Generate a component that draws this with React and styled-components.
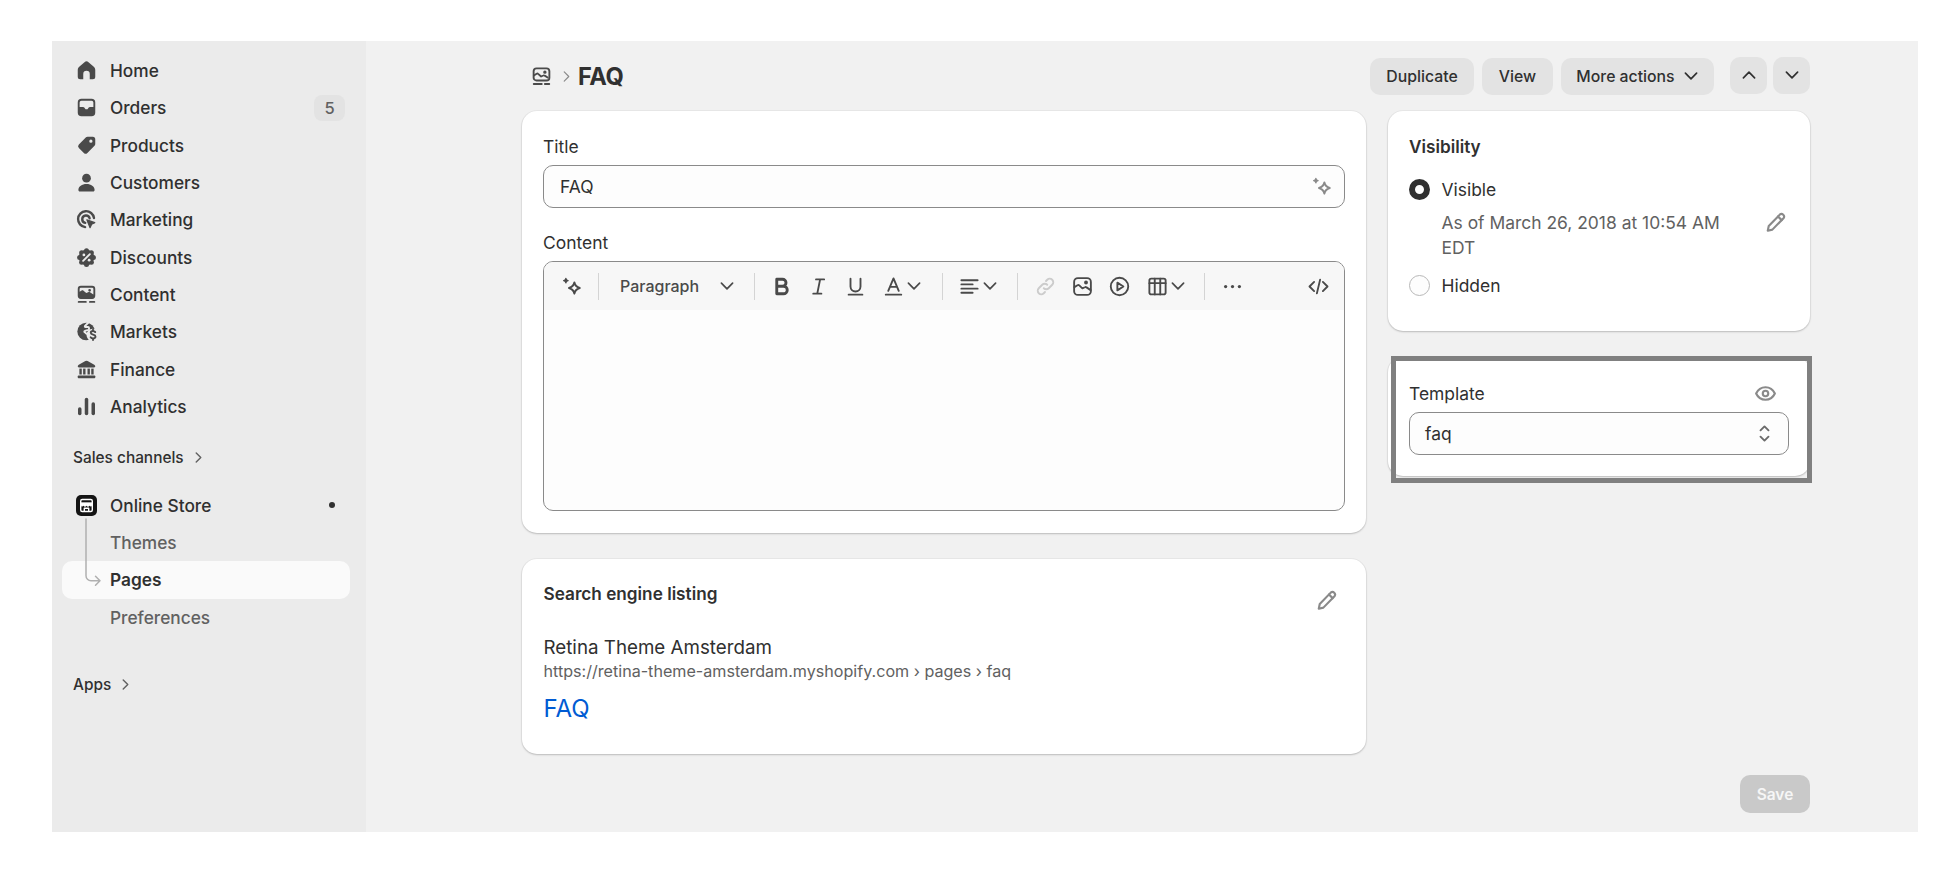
import React from "react";
import styled, { createGlobalStyle } from "styled-components";

const GlobalStyle = createGlobalStyle`
  html, body {
    margin: 0;
    padding: 0;
    background: #ffffff;
  }
  body {
    font-family: Inter, "Noto Sans", "Liberation Sans", sans-serif;
    font-size: 17.45px;
    color: #303030;
  }
  * {
    box-sizing: border-box;
  }
`;

const Page = styled.div`
  width: 1955px;
  height: 880px;
  padding: 41px 37px 48px 52px;
`;

const Shell = styled.div`
  display: flex;
  height: 791px;
  background: #f1f1f1;
`;

/* sidebar */
const Sidebar = styled.nav`
  width: 314px;
  flex-shrink: 0;
  background: #ebebeb;
  padding: 10.7px 16px 0 10px;
`;

const NavRow = styled.div`
  display: flex;
  align-items: center;
  gap: 11.5px;
  height: 37.35px;
  padding: 0 ${(p) => p.$pr || 5}px 0 11.5px;
  border-radius: 10px;
  font-size: 17.3px;
  font-weight: ${(p) => (p.$active ? 600 : p.$sub ? 450 : 500)};
  color: ${(p) => (p.$sub && !p.$active ? "#616161" : "#303030")};
  background: ${(p) => (p.$active ? "#fafafa" : "transparent")};
`;

const NavIconSlot = styled.span`
  width: 25px;
  height: 25px;
  flex-shrink: 0;
  display: flex;
  align-items: center;
  justify-content: center;
`;

const NavLabel = styled.span`
  flex: 1;
`;

const CountBadge = styled.span`
  width: 31px;
  height: 26px;
  border-radius: 8px;
  background: #e3e3e3;
  color: #616161;
  font-size: 16.5px;
  font-weight: 500;
  display: flex;
  align-items: center;
  justify-content: center;
`;

const SectionLink = styled.div`
  display: flex;
  align-items: center;
  gap: 8px;
  height: 20px;
  margin: ${(p) => p.$mt}px 0 0 11px;
  font-size: 15.4px;
  font-weight: 500;
`;

const StoreGroup = styled.div`
  position: relative;
  margin-top: 18.6px;
`;

const Connector = styled.svg`
  position: absolute;
  left: 20px;
  top: 30px;
  width: 30px;
  height: 72px;
  z-index: 1;
`;

const StatusDot = styled.span`
  width: 6px;
  height: 6px;
  border-radius: 50%;
  background: #303030;
`;

const StoreBadge = styled.span`
  width: 21px;
  height: 21px;
  border-radius: 5px;
  background: #141414;
  display: flex;
  align-items: center;
  justify-content: center;
`;

/* main column */
const Main = styled.main`
  flex: 1;
  padding: 16px 108px 0 156px;
`;

const PageHeader = styled.header`
  display: flex;
  align-items: center;
  height: 38px;
  margin-bottom: 16px;
`;

const Crumb = styled.div`
  display: flex;
  align-items: center;
  flex: 1;
  padding-left: 6.5px;
`;

const PageTitle = styled.h1`
  margin: 0 0 0 5px;
  font-size: 23.6px;
  font-weight: 650;
  letter-spacing: -0.4px;
  color: #303030;
`;

const CrumbArrow = styled.span`
  margin-left: 6.5px;
  display: block;
`;

const Actions = styled.div`
  display: flex;
  align-items: center;
  gap: 8px;
`;

const PagerGroup = styled.div`
  display: flex;
  gap: 6px;
  margin: -2px 0 0 8px;
`;

const ActionButton = styled.button`
  display: flex;
  align-items: center;
  justify-content: center;
  gap: 8px;
  width: ${(p) => p.$w}px;
  height: 37px;
  padding: 0;
  border: 0;
  border-radius: 10px;
  background: #e3e3e3;
  color: #303030;
  font: 500 15.8px Inter, sans-serif;
`;

const Columns = styled.div`
  display: grid;
  grid-template-columns: 844px 422px;
  column-gap: 22px;
  align-items: start;
`;

const Stack = styled.div`
  display: flex;
  flex-direction: column;
  gap: 26px;
`;

const Card = styled.section`
  position: relative;
  background: #ffffff;
  border-radius: 15px;
  box-shadow: 0 0 0 1px rgba(26, 26, 26, 0.035), 0 1px 2px rgba(26, 26, 26, 0.22);
`;

const EditCard = styled(Card)`
  padding: 26px 21px 22px;
`;

const FieldLabel = styled.div`
  height: 20px;
  line-height: 20px;
  margin-top: ${(p) => p.$mt || 0}px;
`;

const TextField = styled.div`
  display: flex;
  align-items: center;
  justify-content: space-between;
  height: 43px;
  margin-top: 8px;
  padding: 0 ${(p) => p.$pr || 10}px 0 ${(p) => p.$pl || 16}px;
  border: 1px solid #8a8a8a;
  border-radius: 10px;
  background: #fdfdfd;
`;

const Editor = styled.div`
  height: 250px;
  margin-top: 8px;
  border: 1px solid #8a8a8a;
  border-radius: 10px;
  background: #fdfdfd;
  overflow: hidden;
`;

const Toolbar = styled.div`
  display: flex;
  align-items: center;
  height: 48px;
  padding: 0 7px 0 8px;
  background: #f7f7f7;
`;

const ToolSep = styled.span`
  width: 1px;
  height: 27px;
  margin: 0 8px;
  background: #d4d4d4;
  flex-shrink: 0;
`;

const ToolButton = styled.span`
  display: flex;
  align-items: center;
  justify-content: ${(p) => (p.$pl !== undefined ? "flex-start" : "center")};
  padding-left: ${(p) => p.$pl || 0}px;
  width: ${(p) => p.$w}px;
  height: 34px;
  flex-shrink: 0;
`;

const ParagraphSelect = styled.span`
  display: flex;
  align-items: center;
  justify-content: space-between;
  width: 139px;
  padding: 0 11px 0 13px;
  color: #4a4a4a;
  font-size: 16px;
  font-weight: 450;
`;

const ToolSpacer = styled.span`
  flex: 1;
`;

const SeoCard = styled(Card)`
  padding: 25px 27.5px 30px 21.5px;
`;

const SeoHeader = styled.div`
  display: flex;
  justify-content: space-between;
  align-items: flex-start;
  height: 28.5px;
`;

const CardHeading = styled.h2`
  margin: 0;
  font-size: 17.2px;
  line-height: 20px;
  font-weight: 600;
  color: #303030;
`;

const PencilSlot = styled.span`
  display: block;
  width: 25px;
  height: 25px;
  margin-top: ${(p) => p.$mt || 0}px;
  flex-shrink: 0;
`;

const SeoStore = styled.div`
  margin-top: 22px;
  height: 25px;
  line-height: 25px;
  font-size: 18.75px;
`;

const SeoUrl = styled.div`
  margin-top: 1.5px;
  height: 20px;
  line-height: 20px;
  font-size: 16.13px;
  color: #616161;
`;

const SeoTitle = styled.div`
  margin-top: 13px;
  height: 30px;
  line-height: 30px;
  font-size: 24px;
  color: #005bd3;
`;

const VisibilityCard = styled(Card)`
  height: 220px;
  padding: 26px 21px 0;
`;

const RadioRow = styled.div`
  display: flex;
  align-items: center;
  gap: 11.5px;
  height: 26px;
  margin-top: ${(p) => p.$mt}px;
`;

const Radio = styled.span`
  width: 21px;
  height: 21px;
  border-radius: 50%;
  flex-shrink: 0;
  background: #fdfdfd;
  border: ${(p) => (p.$on ? "6px solid #303030" : "1px solid #b8b8b8")};
`;

const PublishNote = styled.div`
  display: flex;
  justify-content: space-between;
  align-items: flex-start;
  margin-top: 7.5px;
  padding: 0 1.5px 0 32.5px;
`;

const PublishText = styled.div`
  width: 300px;
  line-height: 25px;
  color: #616161;
`;

const TemplateCard = styled(Card)`
  height: 119px;
  padding: 25px 21px 0;
`;

const TemplateHead = styled.div`
  display: flex;
  align-items: center;
  justify-content: space-between;
  height: 22px;
  padding-right: 11.5px;
`;

const FocusFrame = styled.div`
  position: absolute;
  left: 3px;
  top: -1px;
  width: 421px;
  height: 127px;
  border: 5px solid #808080;
  pointer-events: none;
`;

const Footer = styled.div`
  display: flex;
  justify-content: flex-end;
  margin-top: 21px;
`;

const SaveButton = styled.button`
  width: 70px;
  height: 38px;
  border: 0;
  border-radius: 10px;
  background: #c9c9c9;
  color: #f6f6f6;
  font: 600 15.5px Inter, sans-serif;
`;

const Svg = styled.svg`
  width: ${(p) => p.$s || 25}px;
  height: ${(p) => p.$s || 25}px;
  flex-shrink: 0;
  display: block;
  color: ${(p) => p.$c || "#4a4a4a"};
`;

const Line = ({ s, c, w = 1.5, children }) => (
  <Svg $s={s} $c={c} viewBox="0 0 20 20" fill="none" stroke="currentColor" strokeWidth={w} strokeLinecap="round" strokeLinejoin="round">
    {children}
  </Svg>
);

const Solid = ({ c, children }) => (
  <Svg $c={c} viewBox="0 0 20 20" fill="currentColor">
    {children}
  </Svg>
);

const HomeIcon = () => (
  <Solid>
    <path d="M8.4 3.3a2.4 2.4 0 0 1 3.2 0l4 3.5c.9.7 1.4 1.7 1.400 2.800V15a2 2 0 0 1-2 2h-2.400v-4.200a2.600 2.600 0 0 0-5.200 0V17H5a2 2 0 0 1-2-2V9.600c0-1.100.5-2.100 1.400-2.800z" />
  </Solid>
);
const OrdersIcon = () => (
  <Solid>
    <path fillRule="evenodd" d="M6 3h8a3 3 0 0 1 3 3v8a3 3 0 0 1-3 3H6a3 3 0 0 1-3-3V6a3 3 0 0 1 3-3zm0 1.500A1.500 1.500 0 0 0 4.500 6v3.500h2.700c.5 0 .9.2 1.200.6l.5.8c.2.3.5.4.8.4h.6c.3 0 .6-.1.8-.4l.5-.8c.3-.4.7-.6 1.200-.6h2.700V6A1.500 1.500 0 0 0 14 4.500z" />
  </Solid>
);
const TagIcon = () => (
  <Solid>
    <path fillRule="evenodd" d="M11.200 3H15a2 2 0 0 1 2 2v3.800a2 2 0 0 1-.6 1.400l-5.700 5.700a2 2 0 0 1-2.800 0l-4-4a2 2 0 0 1 0-2.800l5.700-5.700A2 2 0 0 1 11.200 3zm2.300 2.200a1.300 1.300 0 1 0 0 2.600 1.300 1.300 0 0 0 0-2.600z" />
  </Solid>
);
const PersonIcon = () => (
  <Solid>
    <circle cx="10" cy="6.500" r="3.500" />
    <path d="M3.500 16c0-2.800 2.900-4.800 6.500-4.800s6.500 2 6.500 4.800c0 .7-.5 1.200-1.200 1.200H4.700c-.7 0-1.200-.5-1.200-1.200z" />
  </Solid>
);
const TargetIcon = () => (
  <Line w={1.9}>
    <path d="M16 8.800A6.400 6.400 0 1 0 8.900 16.100" />
    <path d="M12.500 9A3 3 0 1 0 9 12.700" />
    <path fill="currentColor" strokeWidth="1" d="M10.300 10.300l6.300 2.200-2.500 1.300-1.300 2.700z" />
  </Line>
);
const DiscountIcon = () => (
  <Solid>
    <circle cx="10" cy="10" r="6.200" />
    {[0, 45, 90, 135, 180, 225, 270, 315].map((a) => (
      <circle
        key={a}
        cx={10 + 5.500 * Math.cos((a * Math.PI) / 180)}
        cy={10 + 5.500 * Math.sin((a * Math.PI) / 180)}
        r="2"
      />
    ))}
    <path d="M12.700 7.300L7.300 12.700" stroke="#ebebeb" strokeWidth="1.500" strokeLinecap="round" />
    <circle cx="7.900" cy="7.900" r="1.100" fill="#ebebeb" />
    <circle cx="12.100" cy="12.100" r="1.100" fill="#ebebeb" />
  </Solid>
);
const ContentIcon = () => (
  <Solid>
    <path fillRule="evenodd" d="M5.500 3h9A2.500 2.500 0 0 1 17 5.500v5.500a2.500 2.500 0 0 1-2.500 2.500h-9A2.500 2.500 0 0 1 3 11V5.500A2.500 2.500 0 0 1 5.500 3zm0 1.500a1 1 0 0 0-1 1v2.300l1.600-1c.5-.3 1.100-.3 1.500.1l2.200 1.900 1.500-.7c.5-.2 1.100-.2 1.500.1l2.700 1.700V5.500a1 1 0 0 0-1-1zm7 1a1.100 1.100 0 1 0 0 2.200 1.100 1.100 0 0 0 0-2.200z" />
    <rect x="3" y="15.200" width="7.200" height="1.400" rx=".7" />
    <rect x="12" y="15.200" width="5" height="1.400" rx=".7" />
  </Solid>
);
const ContentOutline = () => (
  <Line>
    <rect x="3.700" y="3.500" width="12.600" height="9.700" rx="2.300" />
    <path d="M3.900 9.200l2.200-1.400c.4-.2.900-.2 1.200.1l2.400 2.100 1.700-.8c.4-.2.800-.2 1.200.1l2.300 1.500" />
    <circle cx="12.700" cy="6.500" r=".6" fill="currentColor" />
    <path d="M3.800 16h6.400M12.700 16h3.500" />
  </Line>
);
const MarketsIcon = () => (
  <Svg viewBox="0 0 20 20" fill="none">
    <circle cx="9.700" cy="10" r="7" fill="currentColor" />
    <path stroke="#ebebeb" strokeWidth="1.500" strokeLinecap="round" strokeLinejoin="round" d="M11.500 2.800L8.800 5.600c-.3.300-.1.800.3.800h2.200c.4 0 .7.300.7.700v1c0 .3-.2.500-.5.600l-2.800.8c-.5.100-.6.700-.2 1l1.500 1.300" />
    <circle cx="15" cy="12.800" r="5" fill="#ebebeb" />
    <path stroke="currentColor" strokeWidth="1.500" strokeLinecap="round" d="M17 10.500c-.4-.6-1-.9-1.800-.9-1 0-1.800.6-1.800 1.400 0 2 3.800 1 3.800 3 0 .9-.8 1.500-2 1.500-.8 0-1.500-.3-1.900-.9M15.200 8.500v1.100M15.200 15.500v1.300" />
  </Svg>
);
const BankIcon = () => (
  <Solid>
    <path d="M9.100 3.200a1.800 1.800 0 0 1 1.800 0l5.300 3c.5.3.8.7.8 1.200 0 .5-.4.900-.9.900H3.900c-.5 0-.9-.4-.9-.9 0-.5.300-.9.800-1.200z" />
    <rect x="4.300" y="9.300" width="1.900" height="4.700" />
    <rect x="7.300" y="9.300" width="1.900" height="4.700" />
    <rect x="10.800" y="9.300" width="1.900" height="4.700" />
    <rect x="13.800" y="9.300" width="1.900" height="4.700" />
    <rect x="3" y="14.800" width="14" height="2.200" rx=".6" />
  </Solid>
);
const BarsIcon = () => (
  <Solid>
    <rect x="3.200" y="10.500" width="2.800" height="6.500" rx="1.400" />
    <rect x="8.600" y="3" width="2.800" height="14" rx="1.400" />
    <rect x="14" y="6.500" width="2.800" height="10.500" rx="1.400" />
  </Solid>
);
const StoreIcon = () => (
  <Svg $s={17} $c="#ffffff" viewBox="0 0 17 17" fill="none" stroke="currentColor" strokeWidth="1.400" strokeLinejoin="round">
    <rect x="2.700" y="2.500" width="11.600" height="12" rx="1.500" />
    <path d="M2.700 6.200h11.600" />
    <path fill="currentColor" strokeWidth="1" d="M2.700 6.200h11.600v1.300a1.400 1.400 0 0 1-2.800.2 1.500 1.500 0 0 1-3 0 1.500 1.500 0 0 1-3 0 1.400 1.400 0 0 1-2.800-.2z" />
    <path d="M6.300 14.500v-3.300h4.400v3.300" />
  </Svg>
);

const Chevron = ({ dir = "down", s = 16, c, w = 2.100 }) => {
  const paths = {
    down: "M3 6.500l7 7 7-7",
    up: "M3 13.500l7-7 7 7",
    right: "M6.500 3l7 7-7 7",
  };
  return (
    <Line s={s} c={c} w={w}>
      <path d={paths[dir]} />
    </Line>
  );
};

const SparkleIcon = ({ c }) => (
  <Line c={c} w={1.600}>
    <path d="M12.300 6.800c.6 2.600 1.600 3.700 4.300 4.400-2.700.7-3.700 1.800-4.300 4.500-.6-2.700-1.600-3.800-4.300-4.500 2.700-.7 3.700-1.800 4.300-4.400z" />
    <path fill="currentColor" strokeWidth="1" d="M5.500 3.500c.2 1.100.7 1.600 1.800 1.800-1.100.2-1.600.7-1.800 1.800-.2-1.100-.7-1.600-1.800-1.800 1.100-.2 1.600-.7 1.800-1.800z" />
  </Line>
);
const PencilIcon = ({ c = "#8a8a8a" }) => (
  <Line c={c} w={1.700}>
    <path d="M13.400 3.700a2.100 2.100 0 0 1 3 2.900l-8.900 9.100-3.700.9.800-3.800z" />
    <path d="M12 5.200l2.900 2.900" />
  </Line>
);
const BoldGlyph = () => (
  <Line w={2.300}>
    <path d="M6.200 4.200h4.600a2.800 2.800 0 0 1 0 5.600H6.200zM6.200 9.800h5.400a3 3 0 0 1 0 6H6.200z" />
  </Line>
);
const ItalicGlyph = () => (
  <Line>
    <path d="M8 4.300h6.500M5.800 15.700h6.500M11.300 4.300L9 15.700" />
  </Line>
);
const UnderlineGlyph = () => (
  <Line>
    <path d="M6 3.800v6.200a4 4 0 0 0 8 0V3.800M4.500 16.500h11" />
  </Line>
);
const ColorGlyph = () => (
  <Line>
    <path d="M5.800 13.500L10 3.500l4.200 10M7.200 10.300h5.600M3.800 16.500h12.400" />
  </Line>
);
const AlignGlyph = () => (
  <Line>
    <path d="M3.500 5h13M3.500 8.300h9M3.500 11.700h13M3.500 15h9" />
  </Line>
);
const LinkGlyph = () => (
  <Line c="#cccccc">
    <path d="M8.600 11.400a2.800 2.800 0 0 0 4 0l2.800-2.800a2.800 2.800 0 0 0-4-4l-1 1" />
    <path d="M11.400 8.600a2.800 2.800 0 0 0-4 0l-2.800 2.800a2.800 2.800 0 0 0 4 4l1-1" />
  </Line>
);
const ImageGlyph = () => (
  <Line>
    <rect x="3.300" y="3.300" width="13.400" height="13.400" rx="3" />
    <path d="M3.500 10.500l2.500-1.500c.5-.3 1-.3 1.400.1l2.500 2.400 2-.9c.4-.2.900-.2 1.300.1l3.300 2.200" />
    <circle cx="12.800" cy="6.800" r=".8" fill="currentColor" />
  </Line>
);
const PlayGlyph = () => (
  <Line>
    <circle cx="10" cy="10" r="7" />
    <path d="M8.300 6.900l4.800 3.100-4.800 3.100z" />
  </Line>
);
const TableGlyph = () => (
  <Line>
    <rect x="3.500" y="3.700" width="13" height="12.600" rx="1.500" />
    <path d="M3.500 7.300h13M7.800 3.700v12.600M12.200 3.700v12.600" />
  </Line>
);
const DotsGlyph = () => (
  <Solid>
    <circle cx="4.500" cy="10" r="1.300" />
    <circle cx="10" cy="10" r="1.300" />
    <circle cx="15.500" cy="10" r="1.300" />
  </Solid>
);
const CodeGlyph = () => (
  <Line>
    <path d="M6.500 6.300L2.800 10l3.700 3.700M13.500 6.300l3.700 3.700-3.700 3.700M11.300 4.500l-2.600 11" />
  </Line>
);
const EyeIcon = () => (
  <Line c="#8a8a8a" w={1.700}>
    <path d="M2.500 10C4 6.800 6.800 5 10 5s6 1.800 7.500 5c-1.500 3.200-4.300 5-7.500 5s-6-1.800-7.500-5z" />
    <circle cx="10" cy="10" r="2.200" />
  </Line>
);
const UpDownIcon = () => (
  <Line c="#6b6b6b">
    <path d="M6.800 7.500L10 4.300l3.200 3.200M6.800 12.500l3.200 3.200 3.200-3.200" />
  </Line>
);

const navItems = [
  ["Home", HomeIcon],
  ["Orders", OrdersIcon, "5"],
  ["Products", TagIcon],
  ["Customers", PersonIcon],
  ["Marketing", TargetIcon],
  ["Discounts", DiscountIcon],
  ["Content", ContentIcon],
  ["Markets", MarketsIcon],
  ["Finance", BankIcon],
  ["Analytics", BarsIcon],
];

function SideNav() {
  return (
    <Sidebar>
      {navItems.map(([label, Icon, count]) => (
        <NavRow key={label}>
          <NavIconSlot>
            <Icon />
          </NavIconSlot>
          <NavLabel>{label}</NavLabel>
          {count && <CountBadge>{count}</CountBadge>}
        </NavRow>
      ))}
      <SectionLink $mt={22.8}>
        Sales channels
        <Chevron dir="right" s={13} c="#616161" w={2.200} />
      </SectionLink>
      <StoreGroup>
        <NavRow $pr={15}>
          <NavIconSlot>
            <StoreBadge>
              <StoreIcon />
            </StoreBadge>
          </NavIconSlot>
          <NavLabel>Online Store</NavLabel>
          <StatusDot />
        </NavRow>
        <NavRow $sub>
          <NavIconSlot />
          <NavLabel>Themes</NavLabel>
        </NavRow>
        <NavRow $sub $active>
          <NavIconSlot />
          <NavLabel>Pages</NavLabel>
        </NavRow>
        <NavRow $sub>
          <NavIconSlot />
          <NavLabel>Preferences</NavLabel>
        </NavRow>
        <Connector viewBox="0 0 30 72" fill="none" stroke="#b0b0b0" strokeWidth="1.500" strokeLinecap="round" strokeLinejoin="round">
          <path d="M4 2v56.700a5 5 0 0 0 5 5h9M13.500 59.200l4.500 4.500-4.500 4.500" />
        </Connector>
      </StoreGroup>
      <SectionLink $mt={38.5}>
        Apps
        <Chevron dir="right" s={13} c="#616161" w={2.200} />
      </SectionLink>
    </Sidebar>
  );
}

function ContentToolbar() {
  return (
    <Toolbar>
      <ToolButton $w={38}>
        <SparkleIcon />
      </ToolButton>
      <ToolSep />
      <ParagraphSelect>
        Paragraph
        <Chevron />
      </ParagraphSelect>
      <ToolSep />
      <ToolButton $w={36}>
        <BoldGlyph />
      </ToolButton>
      <ToolButton $w={39}>
        <ItalicGlyph />
      </ToolButton>
      <ToolButton $w={35}>
        <UnderlineGlyph />
      </ToolButton>
      <ToolButton $w={61} $pl={7.5}>
        <ColorGlyph />
        <Chevron />
      </ToolButton>
      <ToolSep />
      <ToolButton $w={58} $pl={5.5}>
        <AlignGlyph />
        <Chevron />
      </ToolButton>
      <ToolSep />
      <ToolButton $w={38}>
        <LinkGlyph />
      </ToolButton>
      <ToolButton $w={37}>
        <ImageGlyph />
      </ToolButton>
      <ToolButton $w={37}>
        <PlayGlyph />
      </ToolButton>
      <ToolButton $w={58} $pl={6.5}>
        <TableGlyph />
        <Chevron />
      </ToolButton>
      <ToolSep />
      <ToolButton $w={38}>
        <DotsGlyph />
      </ToolButton>
      <ToolSpacer />
      <ToolButton $w={38}>
        <CodeGlyph />
      </ToolButton>
    </Toolbar>
  );
}

export default function App() {
  return (
    <Page>
      <GlobalStyle />
      <Shell>
        <SideNav />
        <Main>
          <PageHeader>
            <Crumb>
              <ContentOutline />
              <CrumbArrow>
                <Chevron dir="right" s={13} c="#8a8a8a" w={1.800} />
              </CrumbArrow>
              <PageTitle>FAQ</PageTitle>
            </Crumb>
            <Actions>
              <ActionButton $w={104}>Duplicate</ActionButton>
              <ActionButton $w={71}>View</ActionButton>
              <ActionButton $w={153}>
                More actions
                <Chevron c="#303030" />
              </ActionButton>
              <PagerGroup>
                <ActionButton $w={37}>
                  <Chevron dir="up" c="#303030" />
                </ActionButton>
                <ActionButton $w={37}>
                  <Chevron c="#303030" />
                </ActionButton>
              </PagerGroup>
            </Actions>
          </PageHeader>
          <Columns>
            <Stack>
              <EditCard>
                <FieldLabel>Title</FieldLabel>
                <TextField>
                  FAQ
                  <SparkleIcon c="#8a8a8a" />
                </TextField>
                <FieldLabel $mt={25}>Content</FieldLabel>
                <Editor>
                  <ContentToolbar />
                </Editor>
              </EditCard>
              <SeoCard>
                <SeoHeader>
                  <CardHeading>Search engine listing</CardHeading>
                  <PencilSlot $mt={3.5}>
                    <PencilIcon />
                  </PencilSlot>
                </SeoHeader>
                <SeoStore>Retina Theme Amsterdam</SeoStore>
                <SeoUrl>https://retina-theme-amsterdam.myshopify.com › pages › faq</SeoUrl>
                <SeoTitle>FAQ</SeoTitle>
              </SeoCard>
            </Stack>
            <Stack>
              <VisibilityCard>
                <CardHeading>Visibility</CardHeading>
                <RadioRow $mt={19}>
                  <Radio $on />
                  Visible
                </RadioRow>
                <PublishNote>
                  <PublishText>As of March 26, 2018 at 10:54 AM EDT</PublishText>
                  <PencilSlot>
                    <PencilIcon />
                  </PencilSlot>
                </PublishNote>
                <RadioRow $mt={13}>
                  <Radio />
                  Hidden
                </RadioRow>
              </VisibilityCard>
              <TemplateCard>
                <TemplateHead>
                  Template
                  <EyeIcon />
                </TemplateHead>
                <TextField $pr={11} $pl={15}>
                  faq
                  <UpDownIcon />
                </TextField>
                <FocusFrame />
              </TemplateCard>
            </Stack>
          </Columns>
          <Footer>
            <SaveButton>Save</SaveButton>
          </Footer>
        </Main>
      </Shell>
    </Page>
  );
}
